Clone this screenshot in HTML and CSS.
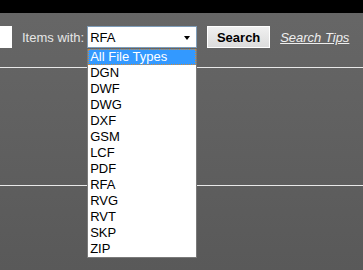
FILE: index.html
```html
<!DOCTYPE html>
<html lang="en">
<head>
  <meta charset="UTF-8" />
  <meta name="viewport" content="width=device-width, initial-scale=1.0"/>
  <title>Item Search</title>
  <link rel="stylesheet" href="styles.css">
</head>
<body>
<div class="top-bar"></div>

<div class="search-row">
  <div class="query-box"></div>
  <span class="items-label">Items with:</span>
  <div class="type-select">
    <span class="type-value">RFA</span>
    <span class="type-arrow"></span>
    <!-- open dropdown list -->
    <ul class="type-list">
      <li class="active">All File Types</li>
      <li>DGN</li>
      <li>DWF</li>
      <li>DWG</li>
      <li>DXF</li>
      <li>GSM</li>
      <li>LCF</li>
      <li>PDF</li>
      <li>RFA</li>
      <li>RVG</li>
      <li>RVT</li>
      <li>SKP</li>
      <li>ZIP</li>
    </ul>
  </div>
  <button class="search-btn">Search</button>
  <a class="tips-link" href="#">Search Tips</a>
</div>

<div class="rule rule-top"></div>
<div class="rule rule-bottom"></div>
</body>
</html>
```

FILE: styles.css
```css
body {
  margin: 0;
  height: 270px;
  background: linear-gradient(#676767, #595959);
  font-family: "Liberation Sans", Arial, sans-serif;
  font-size: 13px;
  color: #eee;
  overflow: hidden;
}
.top-bar {
  height: 13px;
  background: #000;
}
.search-row {
  display: flex;
  align-items: center;
  height: 22px;
  margin-top: 13px;
}
.query-box {
  width: 12px;
  height: 22px;
  background: #fff;
}
.items-label {
  margin-left: 10px;
  color: #e6e6e6;
}
.type-select {
  position: relative;
  box-sizing: border-box;
  width: 110px;
  height: 22px;
  margin-left: 3px;
  background: #fff;
  border: 1px solid #7f9db9;
  color: #000;
  display: flex;
  align-items: center;
}
.type-value {
  padding-left: 2px;
}
.type-arrow {
  position: absolute;
  right: 6px;
  top: 9px;
  border-left: 3px solid transparent;
  border-right: 3px solid transparent;
  border-top: 4px solid #000;
}
.type-list {
  position: absolute;
  top: 22px;
  left: -1px;
  width: 110px;
  box-sizing: border-box;
  margin: 0;
  padding: 0;
  list-style: none;
  background: #fff;
  border: 1px solid #7a7a7a;
  border-top: none;
  z-index: 10;
}
.type-list li {
  height: 16px;
  line-height: 16px;
  padding-left: 2px;
  color: #000;
}
.type-list li.active {
  background: #3399ff;
  color: #fff;
  outline: 1px dotted #d08a3a;
  outline-offset: -1px;
}
.search-btn {
  box-sizing: border-box;
  width: 63px;
  height: 22px;
  margin-left: 10px;
  padding: 0;
  border: 1px solid #fff;
  background: linear-gradient(#f0f0f0, #dcdcdc);
  font-family: "Liberation Sans", Arial, sans-serif;
  font-size: 13px;
  font-weight: bold;
  color: #000;
}
.tips-link {
  margin-left: 10px;
  color: #eee;
  font-style: italic;
}
.rule {
  height: 1px;
  background: #e8e8e8;
}
.rule-top {
  margin-top: 19px;
}
.rule-bottom {
  margin-top: 117px;
}
```
